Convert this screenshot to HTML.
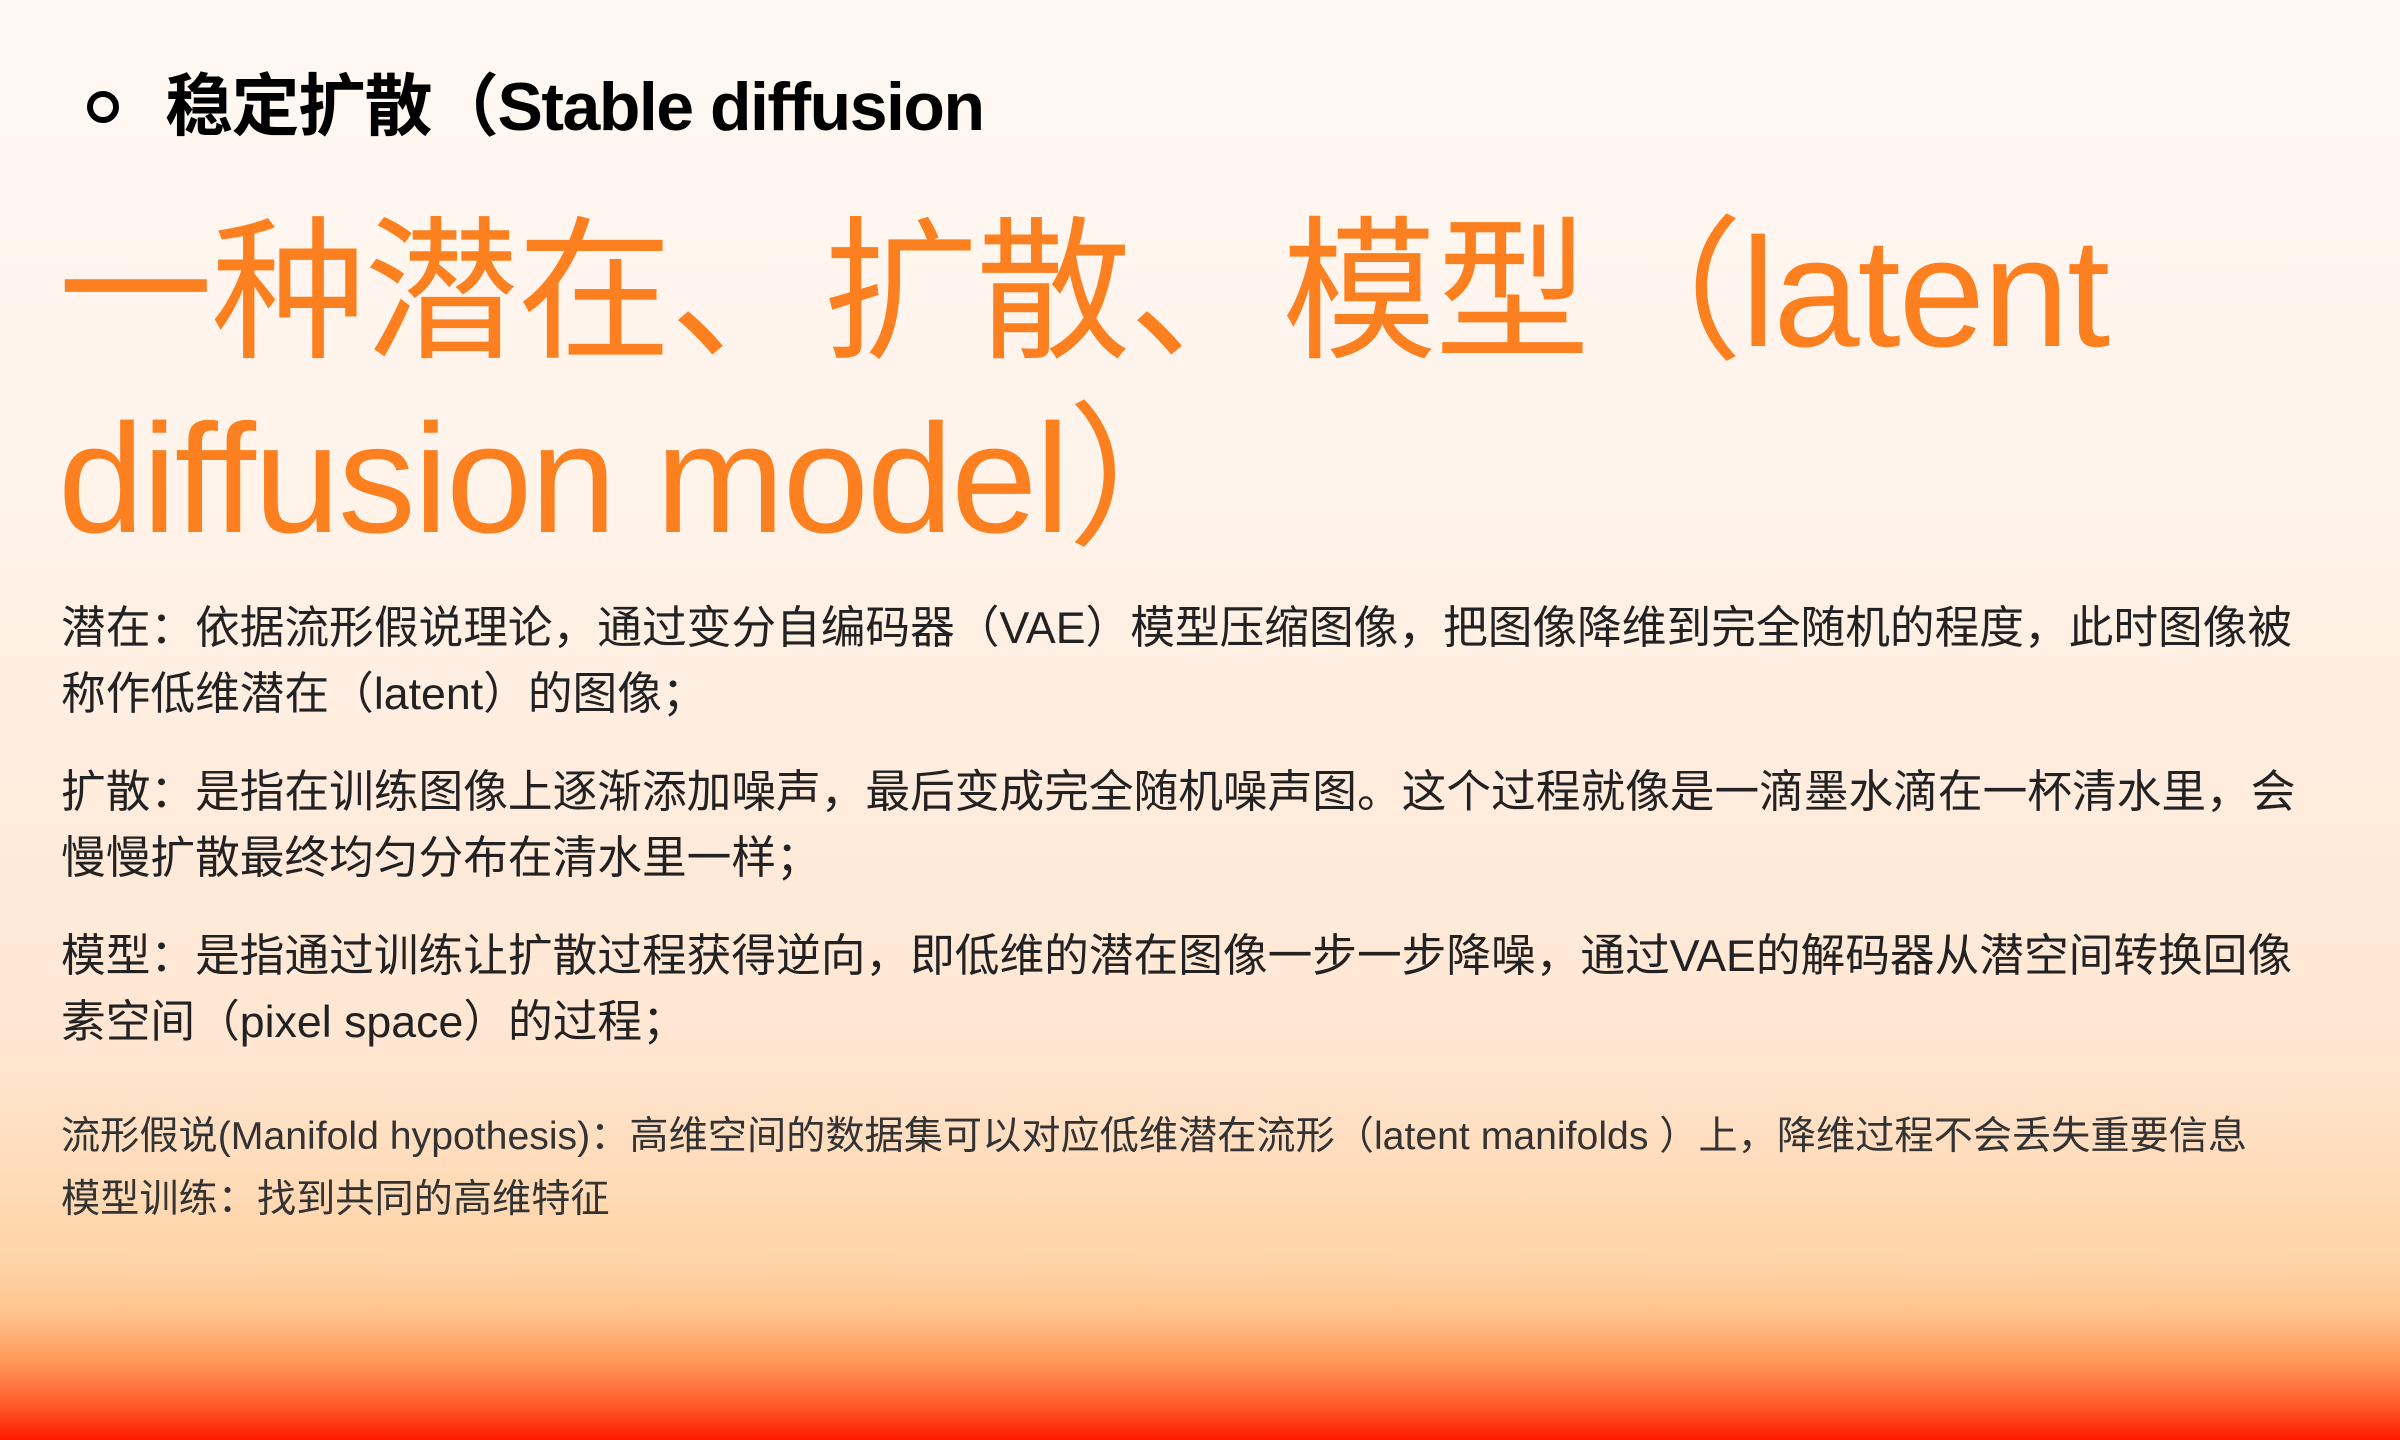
<!DOCTYPE html>
<html><head><meta charset="utf-8"><style>
html,body{margin:0;padding:0}
body{width:2400px;height:1440px;overflow:hidden;position:relative;
background:linear-gradient(to bottom,#fff8f3 0px,#fff3ea 500px,#ffe6d2 1050px,#ffd4a8 1260px,#ffc590 1310px,#ff9a5a 1360px,#ff5a2a 1405px,#ff1a00 1440px);
font-family:"Liberation Sans","Noto Sans CJK SC",sans-serif;}
.ring{position:absolute;left:87px;top:91px;width:20px;height:20px;border:6px solid #000;border-radius:50%}
.title{position:absolute;left:165px;top:62px;font-size:68px;font-weight:bold;color:#000;line-height:90px;white-space:nowrap;letter-spacing:-1.5px}
.big{position:absolute;left:58px;top:200px;font-size:155px;color:#fc8020;line-height:186px;white-space:nowrap;letter-spacing:-2px}
.body{position:absolute;left:61px;top:596px;width:2330px;font-size:44.7px;color:#222;line-height:66px}
.body p{margin:0 0 32px 0;white-space:nowrap}
.small{position:absolute;left:61px;top:1105px;font-size:39.2px;color:#333;line-height:63px;white-space:nowrap}
</style></head><body>
<div class="ring"></div>
<div class="title">稳定扩散（Stable diffusion</div>
<div class="big">一种潜在、扩散、模型（latent<br>diffusion model）</div>
<div class="body">
<p>潜在：依据流形假说理论，通过变分自编码器（VAE）模型压缩图像，把图像降维到完全随机的程度，此时图像被<br>称作低维潜在（latent）的图像；</p>
<p>扩散：是指在训练图像上逐渐添加噪声，最后变成完全随机噪声图。这个过程就像是一滴墨水滴在一杯清水里，会<br>慢慢扩散最终均匀分布在清水里一样；</p>
<p>模型：是指通过训练让扩散过程获得逆向，即低维的潜在图像一步一步降噪，通过VAE的解码器从潜空间转换回像<br>素空间（pixel space）的过程；</p>
</div>
<div class="small">流形假说(Manifold hypothesis)：高维空间的数据集可以对应低维潜在流形（latent manifolds ）上，降维过程不会丢失重要信息<br>模型训练：找到共同的高维特征</div>
</body></html>
